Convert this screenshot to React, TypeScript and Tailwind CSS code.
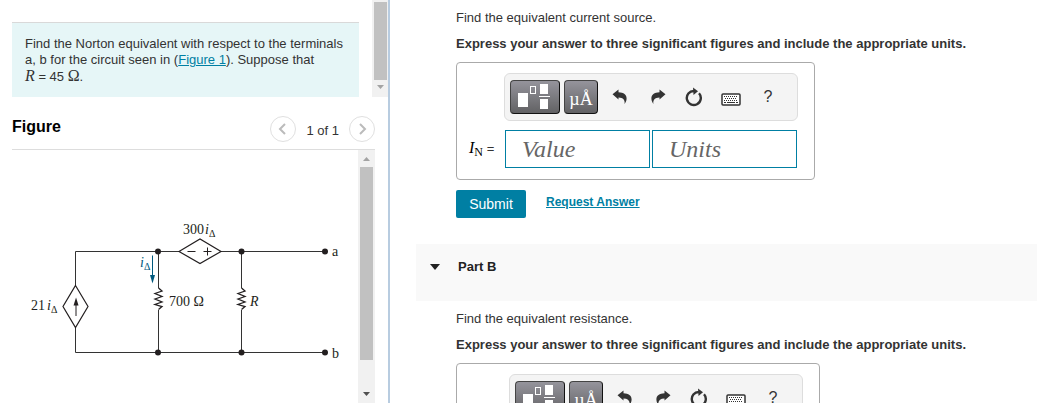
import { useState } from "react";
import type { ReactNode } from "react";

type ToolButtonProps = {
  label: string;
  className: string;
  children: ReactNode;
};

const ToolButton = ({ label, className, children }: ToolButtonProps) => (
  <button
    type="button"
    aria-label={label}
    className={`flex h-[34px] shrink-0 items-center justify-center ${className}`}
  >
    {children}
  </button>
);

const darkButton =
  "rounded border border-[#111] border-t-[#444] border-l-[#444] bg-linear-to-b from-[#95949c] to-[#626264] text-white";

const Toolbar = () => (
  <div className="flex h-12 w-[294px] items-center rounded-md border border-[#ddd] bg-[#f4f4f4] pl-[5px]">
    <ToolButton label="Templates" className={`w-[50px] ${darkButton}`}>
      <svg width="48" height="32" viewBox="0 0 48 32" aria-hidden="true">
        <rect x="7" y="12" width="10" height="14" fill="#fff" />
        <rect x="19.5" y="5.5" width="5" height="7" fill="none" stroke="#fff" />
        <path d="M29 3h8v10h-8zM29 18h8v10h-8zM28 15h11v1H28z" fill="#fff" />
      </svg>
    </ToolButton>
    <ToolButton label="Symbols" className={`ml-1 w-[34px] ${darkButton}`}>
      <span className="mt-1 font-['Liberation_Serif',serif] text-lg leading-6">
        µÅ
      </span>
    </ToolButton>
    <ToolButton label="Undo" className="ml-[11px] w-[22px]">
      <svg width="16" height="16" viewBox="0 0 16 16" aria-hidden="true">
        <path
          d="M.5 5.2 6.500.5v2.800c5.200.1 8.300 2.400 8.100 6.500-.1 2-.9 3.700-2 5.200.5-4.300-1.300-6.500-6.100-6.600v2z"
          fill="#333"
        />
      </svg>
    </ToolButton>
    <ToolButton label="Redo" className="ml-4 w-[22px]">
      <svg width="16" height="16" viewBox="0 0 16 16" aria-hidden="true">
        <g transform="matrix(-1 0 0 1 16 0)">
          <path
            d="M.5 5.2 6.500.5v2.800c5.200.1 8.300 2.400 8.100 6.500-.1 2-.9 3.700-2 5.200.5-4.300-1.300-6.500-6.100-6.600v2z"
            fill="#333"
          />
        </g>
      </svg>
    </ToolButton>
    <ToolButton label="Reset" className="ml-[14px] w-[22px]">
      <svg width="18" height="20" viewBox="0 0 18 20" aria-hidden="true">
        <path
          d="M14 6.3A7 7 0 1 1 9 4"
          fill="none"
          stroke="#333"
          strokeWidth="2.4"
        />
        <path d="M8 .5l5 3.700L8.500 8z" fill="#333" />
      </svg>
    </ToolButton>
    <ToolButton label="Keyboard shortcuts" className="ml-[15px] w-[22px]">
      <svg
        width="20"
        height="13"
        viewBox="0 0 20 13"
        className="mt-1"
        aria-hidden="true"
      >
        <rect
          x="1"
          y="1"
          width="18"
          height="11"
          rx="1"
          fill="#fff"
          stroke="#333"
          strokeWidth="1.5"
        />
        <path
          d="M3 3.5h14M4 5.5h12M3 7.5h14"
          stroke="#333"
          strokeDasharray="1 1"
        />
        <path d="M3 9.5h2M6 9.5h8M15 9.5h2" stroke="#333" />
      </svg>
    </ToolButton>
    <ToolButton label="Help" className="ml-[15px] w-[22px] text-base text-[#333]">
      ?
    </ToolButton>
  </div>
);

const AnswerFields = () => {
  const [value, setValue] = useState("");
  const [units, setUnits] = useState("");
  const field =
    "h-[38px] w-[145px] border border-[#007fa3] bg-white px-4 font-['Liberation_Serif',serif] text-2xl text-[#333] italic outline-none placeholder:text-[#666]";

  return (
    <div className="flex gap-[2px] pr-px">
      <label
        htmlFor="current-value"
        className="w-[34px] text-[13px] leading-[38px] whitespace-nowrap text-[#333]"
      >
        <span className="font-['Liberation_Serif',serif] text-base text-black">
          <i>I</i>
          <sub className="text-xs">N</sub>
        </span>{" "}
        =
      </label>
      <input
        id="current-value"
        className={field}
        placeholder="Value"
        value={value}
        onChange={(e) => setValue(e.target.value)}
      />
      <input
        aria-label="Units"
        className={field}
        placeholder="Units"
        value={units}
        onChange={(e) => setUnits(e.target.value)}
      />
    </div>
  );
};

type AnswerBoxProps = {
  className: string;
  children?: ReactNode;
};

const AnswerBox = ({ className, children }: AnswerBoxProps) => (
  <div
    className={`mt-[10px] flex min-h-[118px] flex-col items-end gap-[9px] rounded border border-[#aaa] pt-[10px] pr-4 ${className}`}
  >
    <Toolbar />
    {children}
  </div>
);

const Circuit = () => (
  <svg
    width="358"
    height="253"
    viewBox="0 150 358 253"
    className="shrink-0"
    role="img"
    aria-label="Circuit with two dependent sources and two resistors"
  >
    {/* Wires */}
    <g fill="none" stroke="#333" strokeWidth="1">
      <path d="M75.5 285.5V251.5H179M221 251.5H325M75.5 327.5V352.5H325" />
      <path d="M158.5 251v37M158.5 310v42M241.5 251v37M241.5 310v42" />
    </g>

    {/* Resistors */}
    <g fill="none" stroke="#231f20" strokeWidth="1.3">
      <path d="M158.5 288l3.500 3-7 2.500 7 3-7 2.500 7 3-7 2.500 7 2-3.500 3" />
      <path d="M241.5 288l3.500 3-7 2.500 7 3-7 2.500 7 3-7 2.500 7 2-3.500 3" />
    </g>

    {/* Sources */}
    <g fill="none" stroke="#231f20" strokeWidth="1.2">
      <path d="M75.5 285.5 88 306.5 75.5 327.5 63 306.5z" />
      <path d="M179 251.5 200 239 221 251.5 200 263.5z" />
      <path d="M187.5 251.500h8M203.500 251.500h8M207.500 247.500v8" strokeWidth="1" />
      <path d="M76 316v-12" strokeWidth="1" />
    </g>
    <path d="M76 297.5l2.500 8h-5z" fill="#231f20" />

    {/* Controlling current */}
    <path d="M152.5 255.5v22" stroke="#00587c" />
    <path d="M152.5 283.5l-2.500-8.500h5z" fill="#00587c" />

    {/* Nodes */}
    <g fill="#231f20">
      <circle cx="158" cy="251.5" r="3" />
      <circle cx="241.5" cy="251.5" r="3" />
      <circle cx="325" cy="251.5" r="3" />
      <circle cx="158" cy="352.5" r="3" />
      <circle cx="241.5" cy="352.5" r="3" />
      <circle cx="325" cy="352.5" r="3" />
    </g>

    <g
      className="font-['Liberation_Serif',serif] text-[14px]"
      fill="#231f20"
    >
      <text x="183" y="234">
        300
        <tspan dx="1" fontStyle="italic">
          i
        </tspan>
        <tspan dy="3" className="text-[10px]">
          Δ
        </tspan>
      </text>
      <text x="31" y="310">
        21
        <tspan dx="2" fontStyle="italic">
          i
        </tspan>
        <tspan dy="3" className="text-[10px]">
          Δ
        </tspan>
      </text>
      <text x="140" y="267" fill="#00587c">
        <tspan fontStyle="italic">i</tspan>
        <tspan dy="3" className="text-[10px]">
          Δ
        </tspan>
      </text>
      <text x="169" y="306">
        700 Ω
      </text>
      <text x="250" y="306" fontStyle="italic">
        R
      </text>
      <text x="332" y="256">
        a
      </text>
      <text x="332" y="358">
        b
      </text>
    </g>
  </svg>
);

type PagerButtonProps = {
  label: string;
  path: string;
};

const PagerButton = ({ label, path }: PagerButtonProps) => (
  <button
    type="button"
    aria-label={label}
    className="flex size-[26px] items-center justify-center rounded-full border border-[#e0e0e0]"
  >
    <svg width="12" height="12" viewBox="0 0 12 12" aria-hidden="true">
      <path d={path} fill="none" stroke="#bbb" strokeWidth="2" />
    </svg>
  </button>
);

const Prompt = ({ children }: { children: ReactNode }) => (
  <>
    <p>{children}</p>
    <p className="mt-[10px] font-bold">
      Express your answer to three significant figures and include the
      appropriate units.
    </p>
  </>
);

const App = () => {
  return (
    <div className="flex h-screen overflow-hidden bg-white font-['Liberation_Sans',Arial,sans-serif] text-[13px] leading-4 text-[#333]">
      {/* Problem statement and figure */}
      <aside className="flex w-[390px] shrink-0 flex-col border-r-2 border-[#b8cce0]">
        <div className="flex justify-between pl-3">
          <div className="mt-[22px] h-[75px] w-[347px] border-t border-[#d9d9d9] bg-[#e6f6f7] px-[13px] pt-[13px]">
            <p>
              Find the Norton equivalent with respect to the terminals a, b for
              the circuit seen in (
              <a href="#figure" className="text-[#007fa3] underline">
                Figure 1
              </a>
              ). Suppose that{" "}
              <span className="inline-block whitespace-nowrap">
                <i className="font-['Liberation_Serif',serif] text-base leading-4">
                  R
                </i>{" "}
                = 45{" "}
                <span className="font-['Liberation_Serif',serif] text-base leading-4">
                  Ω
                </span>
                .
              </span>
            </p>
          </div>
          <div className="flex w-4 flex-col items-center justify-between bg-[#f1f1f1] pt-[2px] pb-2">
            <div className="h-[78px] w-[13px] bg-[#c1c1c1]" />
            <svg width="7" height="4" viewBox="0 0 7 4" aria-hidden="true">
              <path d="M0 0h7L3.5 4z" fill="#a3a3a3" />
            </svg>
          </div>
        </div>

        <section id="figure" className="flex min-h-0 grow flex-col">
          <header className="mr-[13px] ml-3 flex h-[53px] items-center border-b border-[#ddd] pt-3">
            <h2 className="mb-1 grow text-base font-bold text-black">Figure</h2>
            <div className="flex items-center gap-[10px]">
              <PagerButton label="Previous figure" path="M8 1 3 6l5 5" />
              <span className="pt-1">1 of 1</span>
              <PagerButton label="Next figure" path="M4 1l5 5-5 5" />
            </div>
          </header>
          <div className="flex min-h-0 grow">
            <Circuit />
            <div className="flex w-[17px] flex-col items-center justify-between bg-[#f1f1f1] py-[7px]">
              <svg width="7" height="4" viewBox="0 0 7 4" aria-hidden="true">
                <path d="M0 4h7L3.5 0z" fill="#a3a3a3" />
              </svg>
              <div className="mt-[6px] mb-8 w-[13px] grow bg-[#c1c1c1]" />
              <svg width="7" height="4" viewBox="0 0 7 4" aria-hidden="true">
                <path d="M0 0h7L3.5 4z" fill="#505050" />
              </svg>
            </div>
          </div>
        </section>
      </aside>

      {/* Answers */}
      <main className="mr-[15px] ml-[26px] min-w-0 grow">
        <section className="pt-[10px] pl-10">
          <Prompt>Find the equivalent current source.</Prompt>
          <AnswerBox className="w-[359px]">
            <AnswerFields />
          </AnswerBox>
          <div className="mt-[10px] flex gap-5">
            <button
              type="button"
              className="h-7 w-[70px] rounded-xs bg-[#007fa3] text-sm text-white"
            >
              Submit
            </button>
            <a
              href="#answer"
              className="mt-1 text-xs leading-4 font-bold text-[#007fa3] underline"
            >
              Request Answer
            </a>
          </div>
        </section>

        <h2 className="mt-[26px] h-[57px] bg-[#f9f9f9] font-bold text-[#222]">
          <button
            type="button"
            aria-expanded="true"
            className="flex items-center gap-[18px] px-[14px] pt-[15px]"
          >
            <svg width="10" height="6" viewBox="0 0 10 6" aria-hidden="true">
              <path d="M0 0h10L5 6z" fill="#222" />
            </svg>
            Part B
          </button>
        </h2>

        <section className="pt-[10px] pl-10">
          <Prompt>Find the equivalent resistance.</Prompt>
          <AnswerBox className="w-[364px]" />
        </section>
      </main>
    </div>
  );
};

export default App;
